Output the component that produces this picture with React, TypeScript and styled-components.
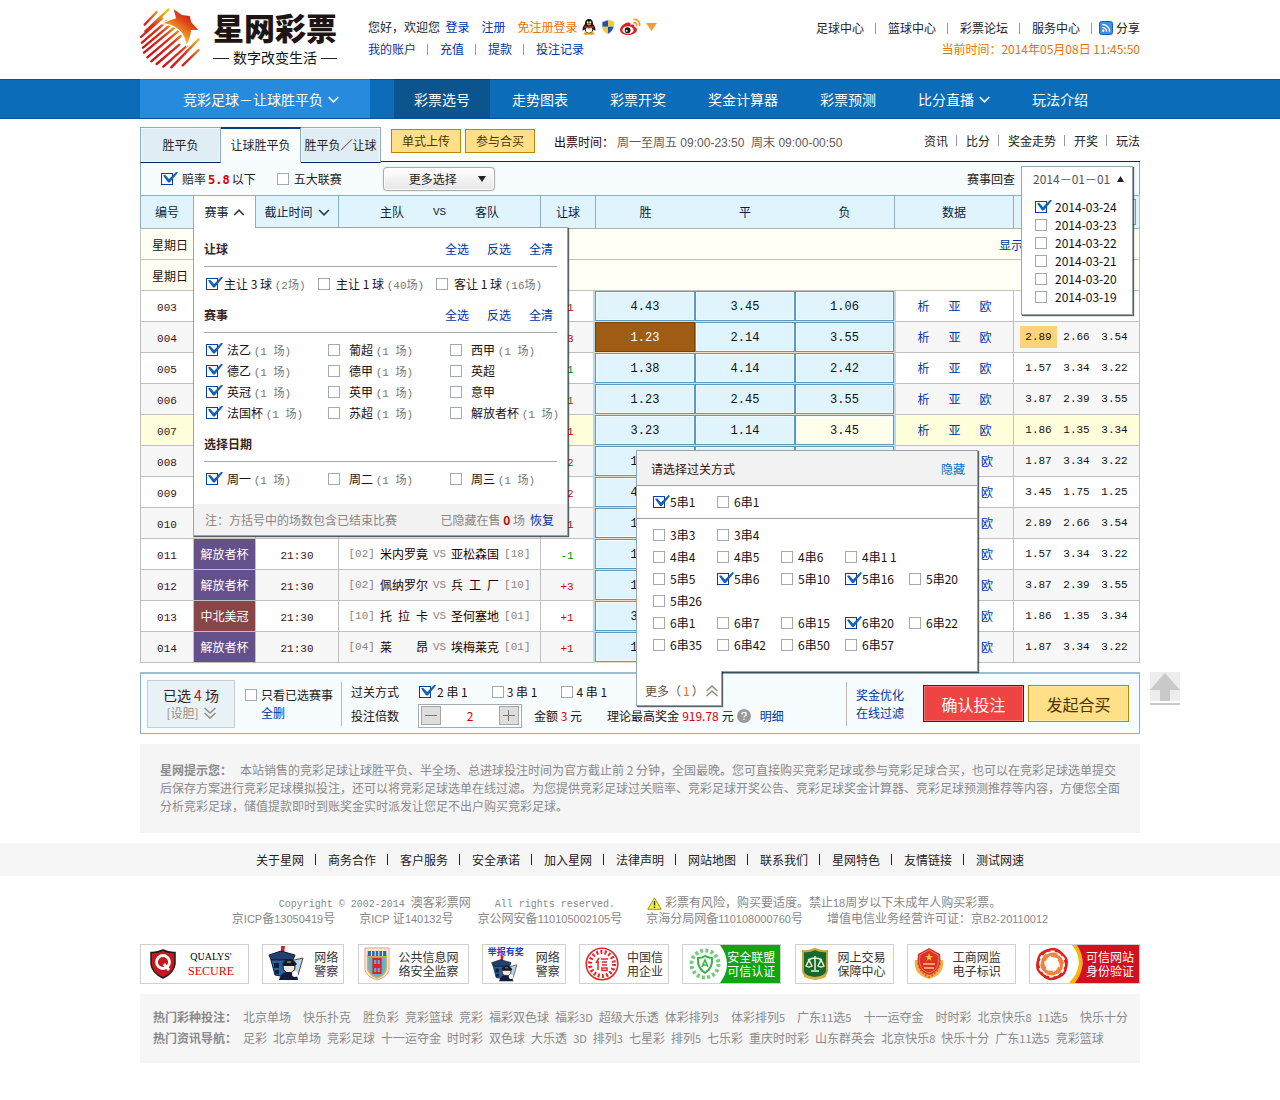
import React from "react";
import styled, { createGlobalStyle, css } from "styled-components";

const sans = `"Noto Sans CJK SC", "Liberation Sans", sans-serif`;
const latin = `"Liberation Sans", "Noto Sans CJK SC", sans-serif`;
const mono = `"Liberation Mono", "Noto Sans CJK SC", monospace`;
const serif = `"Liberation Serif", "Noto Sans CJK SC", serif`;

const c = {
  link: "#0033a8",
  red: "#d60000",
  orange: "#ec7200",
  ink: "#222",
  brown: "#3a1410",
  line: "#c0c0c0",
  blueLine: "#8fafc0",
  sky: "#e0f4fe",
  ice: "#f7fcff",
};

const GlobalStyle = createGlobalStyle`
  *, *::before, *::after { box-sizing: border-box; }
  body { margin: 0; background: #fff; color: ${c.ink}; font: 12px/18px ${sans}; }
  a { color: inherit; text-decoration: none; }
  button, input, select { font: inherit; color: inherit; margin: 0; }
  button { cursor: pointer; padding: 0; }
  h2, h3, p { margin: 0; font: inherit; }
`;

const Wrap = styled.div`
  max-width: 1000px;
  margin: 0 auto;
  white-space: nowrap;
`;

const Row = styled.div<{ $gap?: number; $justify?: string }>`
  display: flex;
  align-items: center;
  gap: ${(p) => p.$gap ?? 0}px;
  justify-content: ${(p) => p.$justify ?? "flex-start"};
`;

const Sep = styled.i<{ $gap?: number; $right?: number; $dark?: boolean }>`
  width: 1px;
  height: 11px;
  flex: none;
  margin-left: ${(p) => p.$gap ?? 11}px;
  margin-right: ${(p) => p.$right ?? (p.$gap ?? 11) + 1}px;
  background: ${(p) => (p.$dark ? "#222" : "#999")};
`;

const Link = styled.a<{ $color?: string }>`
  color: ${(p) => p.$color ?? c.link};
`;

const Red = styled.span`
  color: ${c.red};
`;

const Small = styled.span`
  font-size: 11px;
  line-height: 1;
`;

/* Sets the Latin runs of a mixed line one size down from the Chinese. */
const Mixed = ({ text }: { text: string }) => (
  <>
    {text.split(/([!-~]+)/).map((part, i) => (i % 2 ? <Small key={i}>{part}</Small> : part))}
  </>
);

/* ---------- check boxes ---------- */

const Box = styled.input`
  appearance: none;
  flex: none;
  position: relative;
  width: 12px;
  height: 12px;
  border: 1px solid #a2aaae;
  background: #fff;
  &:checked {
    border-color: #0a3ea0;
  }
  &:checked::after {
    content: "";
    position: absolute;
    left: 1px;
    top: -2px;
    width: 15px;
    height: 11px;
    background: #1260ba;
    clip-path: polygon(0 36%, 14% 30%, 40% 68%, 90% 0, 100% 10%, 45% 100%, 34% 100%);
  }
`;

const CheckLabel = styled.label<{ $gap?: number }>`
  display: inline-flex;
  align-items: center;
  gap: ${(p) => p.$gap ?? 5}px;
`;

const Check = ({ on, gap, children }: { on?: boolean; gap?: number; children: React.ReactNode }) => (
  <CheckLabel $gap={gap}>
    <Box type="checkbox" defaultChecked={on} />
    <span>{children}</span>
  </CheckLabel>
);

/* ---------- small drawings ---------- */

const Chevron = ({ up, color = "#fff", w = 11 }: { up?: boolean; color?: string; w?: number }) => (
  <svg width={w} height="7" viewBox="0 0 11 7" fill="none" stroke={color} strokeWidth="1.6">
    <path d={up ? "M0.7 6 5.5 1.2 10.3 6" : "M0.7 1 5.5 5.8 10.3 1"} />
  </svg>
);

const DoubleChevron = ({ up }: { up?: boolean }) => (
  <svg width="12" height="12" viewBox="0 0 12 12" fill="none" stroke="#9a8d80" strokeWidth="1.6">
    <path d={up ? "M.6 6 6 1l5.400 5M.6 11 6 6l5.400 5" : "M.6 1 6 6l5.400-5M.6 6 6 11l5.400-5"} />
  </svg>
);

const stripes = [
  [26, 62, 62, 24], [28, 82, 97, 17], [15, 99, 78, 43], [18, 116, 93, 51], [21, 131, 106, 60],
  [24, 146, 116, 70], [34, 160, 126, 82], [46, 172, 134, 96], [62, 180, 130, 122], [82, 188, 152, 126],
  [106, 190, 188, 106], [140, 184, 188, 138],
];

const Emblem = () => (
  <svg width="60" height="62" viewBox="12 12 180 186">
    <defs>
      <linearGradient id="stripe" gradientUnits="userSpaceOnUse" x1="50" y1="160" x2="135" y2="60">
        <stop offset="0" stopColor="#cc101b" />
        <stop offset=".55" stopColor="#da3018" />
        <stop offset="1" stopColor="#f0c318" />
      </linearGradient>
      <linearGradient id="star" gradientUnits="userSpaceOnUse" x1="165" y1="30" x2="115" y2="100">
        <stop offset="0" stopColor="#cc1518" />
        <stop offset=".35" stopColor="#de481a" />
        <stop offset="1" stopColor="#f8c82a" />
      </linearGradient>
    </defs>
    <g stroke="url(#stripe)" strokeWidth="7" strokeLinecap="round">
      {stripes.map(([x1, y1, x2, y2]) => (
        <line key={`${x1}-${y1}`} x1={x1} y1={y1} x2={x2} y2={y2} />
      ))}
    </g>
    <path
      d="M113 16 138 33 161 36 166 55 187 78 165 78Q164 100 152 121 146 92 130 78 110 60 82 58 104 47 120 43Z"
      fill="url(#star)"
      stroke="#fff"
      strokeWidth="7"
      paintOrder="stroke"
    />
  </svg>
);

const Penguin = () => (
  <svg width="14" height="16" viewBox="0 0 14 16">
    <ellipse cx="4.500" cy="14.600" rx="3" ry="1.300" fill="#f0a000" />
    <ellipse cx="9.500" cy="14.600" rx="3" ry="1.300" fill="#f0a000" />
    <path d="M7 0C3.800 0 3 2.400 3 5 1.400 7 .3 9 .6 11.500c.6.300 1.400-.5 1.800-1.200C3 13 5 14.300 7 14.300s4-1.300 4.600-4c.4.700 1.200 1.500 1.800 1.200C13.700 9 12.600 7 11 5c0-2.600-.8-5-4-5Z" fill="#161616" />
    <ellipse cx="7" cy="10.800" rx="3.200" ry="3" fill="#fff" />
    <path d="M2.800 6.800C5 8 9 8 11.200 6.800l.3 1.600C9 9.800 5 9.800 2.500 8.400Z" fill="#e02a20" />
    <ellipse cx="5.700" cy="3.400" rx=".9" ry="1.200" fill="#fff" />
    <ellipse cx="8.300" cy="3.400" rx=".9" ry="1.200" fill="#fff" />
    <ellipse cx="7" cy="5.500" rx="2" ry=".7" fill="#f0a000" />
  </svg>
);

const Shield = () => (
  <svg width="14" height="16" viewBox="0 0 14 16">
    <path d="M7 .5 13.300 2.600c.4 6-1.600 10.400-6.300 13C2.300 13 .3 8.600.7 2.600Z" fill="#c8ccd6" />
    <path d="M7 1.500v6.300H1.600C1.500 6 1.500 4.700 1.600 3.300Z" fill="#1e50b8" />
    <path d="M7 1.500v6.300h5.400c.1-1.800.1-3.100 0-4.500Z" fill="#f4cc2c" />
    <path d="M7 14.500V7.800H1.600c.5 3 2.400 5.300 5.400 6.700Z" fill="#f4cc2c" />
    <path d="M7 14.500V7.800h5.400c-.5 3-2.400 5.300-5.400 6.700Z" fill="#1e50b8" />
  </svg>
);

const Weibo = () => (
  <svg width="21" height="18" viewBox="0 0 21 18">
    <path d="M8 4.500C4 5 0 9 0 12c0 3 4 5 8.200 5 5 0 8.800-2.600 8.800-5.300 0-1.700-1.300-2.500-2.700-2.800.6-1.800-.6-3-3.800-2C11 5.200 10 4.300 8 4.500Z" fill="#e01f20" />
    <ellipse cx="8" cy="12" rx="5.600" ry="3.800" fill="#fff" />
    <circle cx="7.600" cy="12.200" r="2.900" fill="#1a1a1a" />
    <circle cx="6.700" cy="12.800" r="1" fill="#fff" />
    <path d="M13.200 4.600c2-.4 3.800 1 3.300 3.300M13.400 1.500c4-.6 7 2.500 6 6.500" fill="none" stroke="#f39a1c" strokeWidth="1.700" />
  </svg>
);

const Triangle = ({ up, color = "#222", w = 8, h = 6 }: { up?: boolean; color?: string; w?: number; h?: number }) => (
  <svg width={w} height={h} viewBox="0 0 8 6" preserveAspectRatio="none">
    <path d={up ? "M0 6 4 0 8 6Z" : "M0 0 4 6 8 0Z"} fill={color} />
  </svg>
);

const Feed = () => (
  <svg width="14" height="14" viewBox="0 0 14 14">
    <rect x=".5" y=".5" width="13" height="13" rx="2" fill="#3d8ee8" stroke="#1560c4" />
    <circle cx="4.300" cy="9.800" r="1.200" fill="#fff" />
    <path d="M3.200 6.300c2.400 0 4.500 2 4.500 4.500M3.200 3.300c4.200 0 7.500 3.300 7.500 7.500" fill="none" stroke="#fff" strokeWidth="1.300" />
  </svg>
);

/* ---------- header ---------- */

const HeaderRow = styled(Wrap)`
  display: flex;
  height: 79px;
`;

const Brand = styled.div`
  display: flex;
  gap: 13px;
  padding-top: 8px;
  width: 228px;
  font-family: ${latin};
`;

const BrandName = styled.div`
  font-weight: 900;
  font-size: 31px;
  line-height: 44px;
  color: #1d1512;
`;

const Slogan = styled.div`
  display: flex;
  align-items: center;
  justify-content: space-between;
  font-size: 14px;
  line-height: 12px;
  color: #111;
  &::before,
  &::after {
    content: "";
    width: 16px;
    height: 1px;
    background: #222;
  }
`;

const Account = styled.div`
  display: flex;
  flex-direction: column;
  gap: 4px;
  padding-top: 18px;
`;

const TopLinks = styled.div`
  margin-left: auto;
  display: flex;
  flex-direction: column;
  align-items: flex-end;
  gap: 3px;
  padding-top: 19px;
`;

const Clock = styled.div`
  color: ${c.orange};
`;

const NavBar = styled.nav`
  background: #0b6cba;
  border-top: 1px solid #07509c;
  border-bottom: 1px solid #07509c;
`;

const NavRow = styled(Wrap)`
  display: flex;
  gap: 2px;
  height: 38px;
`;

const NavItem = styled.a<{ $kind?: "menu" | "active" }>`
  display: flex;
  align-items: center;
  justify-content: center;
  gap: 5px;
  padding: 0 20px;
  font-size: 14px;
  color: #fff;
  ${(p) =>
    p.$kind === "menu" &&
    css`
      width: 230px;
      margin-right: 22px;
      padding-right: 8px;
      background: #268bdc;
      box-shadow: 0 -1px #1578cc;
    `}
  ${(p) =>
    p.$kind === "active" &&
    css`
      background: #0c548e;
      box-shadow: 0 -1px #08407a;
    `}
`;

/* ---------- tabs ---------- */

const TabBar = styled(Wrap)`
  display: flex;
  height: 36px;
  margin-top: 7px;
  border-bottom: 1px solid #0a2466;
`;

const Tab = styled.button<{ $active?: boolean }>`
  width: 80px;
  height: 36px;
  margin-top: 1px;
  padding-bottom: 1px;
  border: 1px solid #8dadbd;
  border-bottom-color: #0a2466;
  background: #e0edf5;
  box-shadow: inset 0 0 0 1px #f0f7fb;
  &:first-child {
    width: 81px;
  }
  & + & {
    border-left: 0;
  }
  ${(p) =>
    p.$active &&
    css`
      border-top: 2px solid #0c3f80;
      border-bottom-color: ${c.ice};
      background: linear-gradient(#fff, ${c.ice});
      box-shadow: none;
    `}
`;

const Gold = styled.button`
  width: 70px;
  height: 24px;
  border: 1px solid #c08400;
  background: #ffdf88;
  color: #4a3500;
`;

const TabButtons = styled.div`
  display: flex;
  gap: 4px;
  padding: 3px 0 0 10px;
`;

const SaleTime = styled.div`
  display: flex;
  align-items: baseline;
  gap: 3px;
  padding: 7px 0 0 19px;
  color: #300;
`;

const Hours = styled.span`
  font-family: ${latin};
  color: #665a55;
`;

const TabLinks = styled.div`
  margin-left: auto;
  display: flex;
  align-items: center;
  height: 29px;
`;

/* ---------- filter row ---------- */

const Filters = styled(Wrap)`
  display: flex;
  align-items: center;
  gap: 21px;
  height: 33px;
  padding: 0 6px 0 20px;
  background: ${c.ice};
  border: solid ${c.blueLine};
  border-width: 0 1px;
`;

const Strong = styled.b`
  color: ${c.red};
  font-family: "DejaVu Sans Mono", monospace;
  font-size: 12px;
  line-height: 1;
  margin: 0 2px;
`;

const MoreWrap = styled.div`
  position: relative;
  margin-left: 20px;
  svg {
    position: absolute;
    right: 9px;
    top: 9px;
    pointer-events: none;
  }
`;

const MoreSelect = styled.select`
  appearance: none;
  width: 112px;
  height: 24px;
  padding: 0 25px;
  border: 1px solid #a8acae;
  border-radius: 4px;
  background: linear-gradient(#fff, #e6e6e6);
  box-shadow: inset 0 0 0 1px #fff, 0 0 1px #999;
`;

const History = styled.div`
  margin-left: auto;
  display: flex;
  align-items: center;
  gap: 6px;
`;

const DateAnchor = styled.div`
  position: relative;
  width: 112px;
  height: 26px;
`;

const popup = css`
  position: absolute;
  background: #fff;
  border: 1px solid #98a4aa;
  box-shadow: 1px 1px 1px rgba(20, 30, 35, 0.7);
`;

const DatePopup = styled.div`
  ${popup}
  z-index: 5;
  top: 0;
  left: 0;
  right: 0;
  padding-bottom: 8px;
`;

const DateButton = styled.button`
  display: flex;
  align-items: center;
  justify-content: space-between;
  width: 100%;
  height: 24px;
  padding: 0 8px 0 11px;
  border: 0;
  background: none;
  color: #555;
  white-space: nowrap;
`;

const DateList = styled.div`
  display: flex;
  flex-direction: column;
  padding: 7px 0 0 13px;
  color: #111;
`;

/* ---------- match table ---------- */

const TableArea = styled(Wrap)`
  position: relative;
`;

const Matches = styled.table`
  width: 100%;
  table-layout: fixed;
  border-collapse: separate;
  border-spacing: 0;
  border-right: 1px solid ${c.line};
  text-align: center;
`;

const Th = styled.th<{ $open?: boolean; $plain?: boolean; $end?: boolean }>`
  height: 34px;
  padding: 0;
  font-weight: normal;
  color: #0b1c38;
  background: ${(p) => (p.$open ? "#fff" : c.sky)};
  border: solid ${c.blueLine};
  border-width: 1px 0 1px ${(p) => (p.$plain ? 0 : 1)}px;
  border-bottom-color: ${(p) => (p.$open ? "#fff" : "#a8b4ba")};
  ${(p) =>
    p.$end &&
    css`
      text-align: right;
      padding-right: 3px;
    `}
`;

const Td = styled.td<{ $bg?: string; $kind?: "odds" | "data" | "hand" }>`
  height: 31px;
  padding: 0;
  background: ${(p) => p.$bg ?? "transparent"};
  border: solid ${c.line};
  border-width: 0 0 1px 1px;
  ${(p) => p.$kind === "data" && css`border-left: 2px solid #b9dcec;`}
  ${(p) => p.$kind === "hand" && css`border-right: 2px solid #b9dcec;`}
  ${(p) =>
    p.$kind === "odds" &&
    css`
      border-left: 0;
      border-bottom-color: #ecdccb;
    `}
`;

const DayTd = styled(Td)`
  text-align: left;
  padding: 2px 0 0 11px;
  color: #211;
`;

const DayRow = styled.div`
  display: flex;
  justify-content: flex-end;
  padding-right: 116px;
`;

const Tr = styled.tr<{ $bg: string }>`
  background: ${(p) => p.$bg};
`;

const Code = styled.span<{ $color?: string }>`
  font: 11px/16px ${mono};
  color: ${(p) => p.$color ?? c.brown};
`;

const OddsButton = styled.button<{ $state?: "on" | "hover" }>`
  display: block;
  width: 100%;
  height: 30px;
  padding-top: 2px;
  border: 1px solid #5b9aba;
  background: ${c.sky};
  box-shadow: inset 0 0 0 1px #f2fbff;
  font: 12px/18px ${mono};
  color: #111;
  ${(p) =>
    p.$state === "on" &&
    css`
      border-color: #7a4300;
      background: #a05c14;
      box-shadow: none;
      color: #fff;
    `}
  ${(p) => p.$state === "hover" && css`background: #ffffec;`}
`;

const DataLinks = styled.div<{ $end: boolean }>`
  display: flex;
  gap: 19px;
  justify-content: ${(p) => (p.$end ? "flex-end" : "center")};
  padding-right: ${(p) => (p.$end ? 20 : 0)}px;
`;

const Averages = styled.div`
  display: grid;
  grid-template-columns: repeat(3, 37px);
  gap: 1px;
  justify-content: center;
`;

const Average = styled.span<{ $mark?: boolean }>`
  font: 11px/22px ${mono};
  color: #111;
  background: ${(p) => (p.$mark ? "#ffd27c" : "none")};
`;

const Team = styled.span`
  width: 48px;
  color: #200;
`;

const HeadSelect = styled.select`
  appearance: none;
  width: 66px;
  height: 26px;
  padding: 0 4px;
  border: 1px solid #6f9fb8;
  background: ${c.sky};
`;

/* ---------- league popup ---------- */

const LeaguePopup = styled.div`
  ${popup}
  z-index: 4;
  left: 53px;
  top: 32px;
  width: 375px;
  padding-top: 13px;
  &::before {
    content: "";
    position: absolute;
    left: 0;
    top: -1px;
    width: 61px;
    height: 1px;
    background: #fff;
  }
`;

const Section = styled.section`
  padding: 0 10px 0 12px;
`;

const SectionHead = styled.div`
  display: flex;
  gap: 18px;
  height: 26px;
  margin: 0 0 6px -2px;
  padding-right: 4px;
  border-bottom: 1px solid #a0a8aa;
  line-height: 16px;
`;

const SectionTitle = styled.h3`
  flex: 1;
  font-weight: bold;
  color: #3a2420;
`;

const Grid = styled.div<{ $cols: string; $line: number; $bottom?: number }>`
  display: grid;
  grid-template-columns: ${(p) => p.$cols};
  grid-auto-rows: ${(p) => p.$line}px;
  align-items: center;
  margin-bottom: ${(p) => p.$bottom ?? 0}px;
  color: #211;
`;

const Count = styled.span`
  font: 11px/1 ${mono};
  color: #777;
`;

const LeagueFoot = styled.div`
  display: flex;
  align-items: center;
  height: 31px;
  padding: 0 13px 0 11px;
  background: #f2f2f2;
  color: #8a8582;
  gap: 5px;
`;

const Push = styled.span`
  margin-left: auto;
`;

/* ---------- bet bar ---------- */

const BetBar = styled(Wrap)`
  position: relative;
  display: flex;
  align-items: center;
  height: 62px;
  margin-top: 9px;
  padding: 0 10px 0 6px;
  background: ${c.ice};
  border: 1px solid ${c.blueLine};
  border-top: 2px solid #a0bfce;
`;

const Picked = styled.button`
  width: 88px;
  height: 48px;
  border: 1px solid #c9cccd;
  background: #e9f2f6;
  color: #322;
  font-size: 14px;
`;

const Dan = styled.span`
  display: flex;
  align-items: center;
  justify-content: center;
  gap: 5px;
  font-size: 12px;
  color: #9a8d80;
`;

const OnlyPicked = styled.div`
  display: flex;
  flex-direction: column;
  padding-left: 10px;
  a {
    padding-left: 16px;
  }
`;

const Rule = styled.i`
  width: 1px;
  height: 44px;
  background: #bbb;
  margin: 0 9px 0 8px;
`;

const BetLines = styled.div`
  display: grid;
  grid-template-rows: 24px 24px;
  color: #211;
`;

const BetLine = styled.div`
  display: flex;
  align-items: center;
`;

const PassChoices = styled.div`
  display: flex;
  gap: 24px;
  padding-left: 20px;
`;

const Stepper = styled.div`
  display: flex;
  align-items: center;
  justify-content: space-between;
  width: 104px;
  height: 24px;
  margin: 0 12px 0 19px;
  padding: 0 2px;
  border: 1px solid #a5acb0;
  background: #fff;
`;

const StepButton = styled.button`
  display: grid;
  place-items: center;
  width: 20px;
  height: 19px;
  border: 1px solid #a5a5a5;
  background: #dedede;
`;

const StepInput = styled.input`
  width: 40px;
  border: 0;
  padding: 0;
  text-align: center;
  color: ${c.red};
  background: none;
`;

const Prize = styled.span`
  display: flex;
  align-items: center;
  gap: 3px;
  margin: 0 9px 0 25px;
`;

const Actions = styled.div`
  display: flex;
  gap: 4px;
  padding-left: 19px;
`;

const Links2 = styled.div`
  display: flex;
  flex-direction: column;
`;

const Action = styled.button<{ $gold?: boolean }>`
  width: 101px;
  height: 37px;
  border: 1px solid ${(p) => (p.$gold ? "#c08400" : "#7a0808")};
  background: ${(p) => (p.$gold ? "#ffdf88" : "#ee4444")};
  color: ${(p) => (p.$gold ? "#4a3500" : "#fff")};
  box-shadow: inset 0 0 0 1px rgba(255, 255, 255, 0.25);
  font-size: 16px;
`;

const PassPopup = styled.div`
  ${popup}
  z-index: 6;
  left: 495px;
  bottom: calc(100% + 2px);
  width: 342px;
  height: 222px;
`;

const PassHead = styled.div`
  display: flex;
  align-items: center;
  justify-content: space-between;
  height: 35px;
  padding: 1px 12px 0 14px;
  background: #f2f2f2;
  border-bottom: 1px solid #98a4aa;
  color: #311;
`;

const PassTop = styled.div`
  display: flex;
  align-items: center;
  height: 33px;
  padding-left: 16px;
  border-bottom: 1px solid #98a4aa;
`;

const PassBody = styled.div`
  padding: 5px 0 0 16px;
`;

const PassTail = styled.button`
  position: absolute;
  top: 100%;
  left: -1px;
  display: flex;
  align-items: center;
  gap: 2px;
  width: 86px;
  height: 35px;
  padding: 6px 0 0 8px;
  background: #fff;
  border: 1px solid #98a4aa;
  border-top: 0;
  box-shadow: 1px 1px 1px rgba(20, 30, 35, 0.7);
  color: #665040;
`;

const ToTop = styled.a`
  position: absolute;
  left: calc(100% + 11px);
  top: -2px;
  width: 30px;
  height: 33px;
`;

/* ---------- footer ---------- */

const Tips = styled(Wrap)`
  margin-top: 10px;
  padding: 17px 20px 18px;
  background: #f5f5f5;
  color: #8a8a8a;
  white-space: normal;
  b {
    margin-right: 8px;
  }
`;

const SiteLinks = styled.nav`
  margin-top: 10px;
  display: flex;
  align-items: center;
  justify-content: center;
  height: 33px;
  background: #f6f6f6;
`;

const Legal = styled(Wrap)`
  padding-top: 19px;
  color: #888;
  font-family: ${latin};
  line-height: 16px;
`;

const LatinMono = styled.span`
  font: 10px/1 ${mono};
`;

const LegalRow = styled.div`
  display: flex;
  justify-content: center;
  gap: 24px;
  height: 16px;
`;

const Warn = styled.span`
  display: flex;
  align-items: center;
  gap: 3px;
  margin-left: 8px;
`;

const Badges = styled(Wrap)`
  display: flex;
  justify-content: space-between;
  margin-top: 17px;
  font-family: ${latin};
`;

const Badge = styled.a<{ $w: number }>`
  position: relative;
  display: flex;
  align-items: center;
  justify-content: space-between;
  width: ${(p) => p.$w}px;
  height: 40px;
  padding: 0 5px;
  overflow: hidden;
  border: 1px solid #d0d0d0;
  line-height: 14px;
  color: #333;
`;

const IconPad = styled.span`
  display: flex;
  padding-left: 4px;
`;

const Award = styled.span`
  position: absolute;
  left: 5px;
  top: 1px;
  font-size: 9px;
  line-height: 12px;
  font-weight: bold;
  color: #2440b8;
`;

const BadgeText = styled.span<{ $light?: boolean; $pad?: number }>`
  position: relative;
  padding: 2px ${(p) => p.$pad ?? 0}px 0 0;
  color: ${(p) => (p.$light ? "#fff" : "inherit")};
`;

const BadgeSweep = styled.svg`
  position: absolute;
  right: 0;
  top: 0;
`;

const Qualys = styled.span`
  font: 10px/14px ${serif};
  color: #000;
  text-align: center;
  padding-right: 9px;
  em {
    display: block;
    font-style: normal;
    font-size: 12px;
    color: #d00;
  }
`;

const Hot = styled(Wrap)`
  margin-top: 10px;
  padding: 12px 13px 15px;
  background: #f6f6f6;
  color: #8a8a8a;
`;

const HotRow = styled.div`
  display: flex;
  gap: 6px;
  height: 21px;
  line-height: 21px;
`;

const HotLink = styled.a<{ $wide?: boolean }>`
  margin-left: ${(p) => (p.$wide ? 6 : 0)}px;
`;

/* ---------- badge pictures ---------- */

const PoliceBox = ({ small }: { small?: boolean }) => (
  <svg width="36" height="36" viewBox="0 0 36 36">
    <g transform={small ? "translate(3 10) scale(.74)" : undefined}>
      <path d="M13 0h4l-1 7h-3Z" fill="#e02020" />
      <path d="M1 9 13 5l14 4-2 5H3Z" fill="#23406e" stroke="#0c1c3c" />
      <path d="M3 14h17l-2 17-11-2Z" fill="#2a62a0" stroke="#0c1c3c" />
      <path d="M6 17h5v5H6Zm1 7h4v4H7Z" fill="#0f2240" />
      <path d="M22 15 35 12l-5 17-10 3Z" fill="#bcd4e8" stroke="#444" />
      <circle cx="21" cy="21" r="6" fill="#f4e6d6" stroke="#111" />
      <path d="M14 18q7-10 15 0l-2 2H16Z" fill="#10182c" />
      <path d="M19 16h4" stroke="#e8c23a" />
      <path d="M11 34q2-9 10-8 8 0 9 8Z" fill="#141e3c" />
      <circle cx="27" cy="28" r="3" fill="#fff" />
    </g>
  </svg>
);

const QualysMark = () => (
  <svg width="26" height="30" viewBox="0 0 26 30">
    <path d="M13 1q6 3 12 2.500V15q-1 9-12 14Q2 24 1 15V3.500Q7 4 13 1Z" fill="#c8171e" stroke="#1c1c1c" strokeWidth="1.500" />
    <circle cx="13" cy="13" r="6.500" fill="none" stroke="#fff" strokeWidth="2.800" />
    <path d="m14 15 5 6" stroke="#fff" strokeWidth="2.800" />
  </svg>
);

const InfoShield = () => (
  <svg width="26" height="34" viewBox="0 0 28 34" preserveAspectRatio="none">
    <path d="M1 1h26v22q-2 7-13 10Q3 30 1 23Z" fill="#f3ead0" stroke="#e89a9a" />
    <path d="M4 9h20v13q-2 7-10 9Q6 28 4 22Z" fill="#58b4e4" stroke="#e0b030" strokeWidth="1.500" />
    <path d="M4 4h20v5H4Z" fill="#2a67b8" />
    <path d="M8 4v5M12 4v5M16 4v5M20 4v5" stroke="#fff" />
    <path d="M10 12h8v6h-8Zm0 8h8v6h-8Z" fill="none" stroke="#d8261e" strokeWidth="2" />
    <path d="M14 11v15" stroke="#d8261e" strokeWidth="1.500" />
  </svg>
);

const TrustSeal = () => (
  <svg width="34" height="34" viewBox="0 0 34 34" fill="none" stroke="#e02a2a">
    <circle cx="17" cy="17" r="15.800" strokeWidth="1.600" />
    <circle cx="17" cy="17" r="12" strokeWidth="4" strokeDasharray="2 2.200" />
    <path d="M14 11l-3 5M13 14v9M16 12h7M17 15h5M17 18h5M17 21h5v2.500h-5Z" strokeWidth="1.500" />
  </svg>
);

const Laurel = () => (
  <svg width="34" height="34" viewBox="0 0 34 34" fill="none" stroke="#3cb44a">
    <circle cx="17" cy="17" r="13.500" strokeWidth="4" strokeDasharray="3 2.300" opacity=".7" />
    <path d="M17 9q4 2 7 2 1 10-7 15-8-5-7-15 4 0 7-2Z" strokeWidth="2" fill="#fff" />
    <path d="m14 20 3-7 3 7M15 18h4" strokeWidth="1.600" />
  </svg>
);

const Scales = () => (
  <svg width="28" height="34" viewBox="0 0 28 34">
    <path d="M2 4q6 1 12-2 6 3 12 2v20q0 5-12 8Q2 29 2 24Z" fill="#146a2c" stroke="#caa23a" strokeWidth="2" />
    <path d="M14 9v14M7 13q7-4 14 0M5 19l3-6 3 6q-3 2-6 0Zm12 0 3-6 3 6q-3 2-6 0ZM10 24h8" fill="none" stroke="#f2f4d8" strokeWidth="1.500" />
    <path d="M3 27q11 6 22 0v3q-11 5-22 0Z" fill="#d8b040" />
  </svg>
);

const Crest = () => (
  <svg width="32" height="34" viewBox="0 0 32 34">
    <path d="M2 13Q0 28 16 32 32 28 30 13Z" fill="#f2b04c" />
    <path d="M5 16q2 10 11 14M27 16q-2 10-11 14" stroke="#d8641e" fill="none" strokeWidth="2" strokeDasharray="2 1.500" />
    <path d="M16 1 27 7q2 12-4 17-3 3-7 4-4-1-7-4Q3 19 5 7Z" fill="#dc3228" />
    <path d="M16 3 25 8q2 10-3 15-3 2-6 3-3-1-6-3Q5 18 7 8Z" fill="none" stroke="#ee7a5a" />
    <path d="m16 6 1 3h3l-2.500 2 1 3-2.500-2-2.500 2 1-3L12 9h3Z" fill="#f8c83c" />
    <path d="M10 16h12v2H10Zm1 4h10v2H11Z" fill="#f3a05a" />
  </svg>
);

const Knot = () => (
  <svg width="34" height="34" viewBox="0 0 34 34" fill="none">
    {[0, 60, 120, 180, 240, 300].map((a) => (
      <g key={a} transform={`rotate(${a} 17 17)`}>
        <path d="M7 8Q11 2 19 2q6 1 9 7" stroke="#dc241c" strokeWidth="2.400" />
        <path d="M10 14q3-8 11-6 6 2 7 9" stroke="#f0803a" strokeWidth="1.800" />
      </g>
    ))}
  </svg>
);

/* ---------- data ---------- */

type Match = {
  id: string;
  league?: [string, string];
  time?: string;
  teams?: [string, string, string, string];
  hand: string;
  odds: string[];
  avg: string[];
};

const purple = "#64508a";
const matches: Match[] = [
  { id: "003", hand: "+1", odds: ["4.43", "3.45", "1.06"], avg: [] },
  { id: "004", hand: "+3", odds: ["1.23", "2.14", "3.55"], avg: ["2.89", "2.66", "3.54"] },
  { id: "005", hand: "-1", odds: ["1.38", "4.14", "2.42"], avg: ["1.57", "3.34", "3.22"] },
  { id: "006", hand: "-1", odds: ["1.23", "2.45", "3.55"], avg: ["3.87", "2.39", "3.55"] },
  { id: "007", hand: "+1", odds: ["3.23", "1.14", "3.45"], avg: ["1.86", "1.35", "3.34"] },
  { id: "008", hand: "+2", odds: ["1.38", "", ""], avg: ["1.87", "3.34", "3.22"] },
  { id: "009", hand: "+2", odds: ["4.43", "", ""], avg: ["3.45", "1.75", "1.25"] },
  { id: "010", hand: "+1", odds: ["1.23", "", ""], avg: ["2.89", "2.66", "3.54"] },
  { id: "011", league: ["解放者杯", purple], time: "21:30", teams: ["02", "米内罗竟", "亚松森国", "18"], hand: "-1", odds: ["1.38", "", ""], avg: ["1.57", "3.34", "3.22"] },
  { id: "012", league: ["解放者杯", purple], time: "21:30", teams: ["02", "佩纳罗尔", "兵\u2002工\u2002厂", "10"], hand: "+3", odds: ["1.23", "", ""], avg: ["3.87", "2.39", "3.55"] },
  { id: "013", league: ["中北美冠", "#884648"], time: "21:30", teams: ["10", "托\u2002拉\u2002卡", "圣何塞地", "01"], hand: "+1", odds: ["3.23", "", ""], avg: ["1.86", "1.35", "3.34"] },
  { id: "014", league: ["解放者杯", purple], time: "21:30", teams: ["04", "莱\u3000\u3000昂", "埃梅莱克", "01"], hand: "+1", odds: ["1.38", "", ""], avg: ["1.87", "3.34", "3.22"] },
];

const leagues: [string, boolean, boolean][] = [
  ["法乙", true, true], ["葡超", false, true], ["西甲", false, true],
  ["德乙", true, true], ["德甲", false, true], ["英超", false, false],
  ["英冠", true, true], ["英甲", false, true], ["意甲", false, false],
  ["法国杯", true, true], ["苏超", false, true], ["解放者杯", false, true],
];

const passes: (string | null)[] = [
  "3串3", "3串4", null, null, null,
  "4串4", "4串5", "4串6", "4串1 1", null,
  "5串5", "5串6", "5串10", "5串16", "5串20",
  "5串26", null, null, null, null,
  "6串1", "6串7", "6串15", "6串20", "6串22",
  "6串35", "6串42", "6串50", "6串57", null,
];
const passesOn = ["5串6", "5串16", "6串20"];

const hot1: [string, boolean?][] = [
  ["北京单场"], ["快乐扑克", true], ["胜负彩", true], ["竞彩篮球"], ["竞彩"], ["福彩双色球"], ["福彩3D"], ["超级大乐透"],
  ["体彩排列3"], ["体彩排列5", true], ["广东11选5", true], ["十一运夺金", true], ["时时彩", true], ["北京快乐8"], ["11选5"], ["快乐十分", true],
];
const hot2 = ["足彩", "北京单场", "竞彩足球", "十一运夺金", "时时彩", "双色球", "大乐透", "3D", "排列3", "七星彩", "排列5", "七乐彩", "重庆时时彩", "山东群英会", "北京快乐8", "快乐十分", "广东11选5", "竞彩篮球"];

/* Puts a divider between the links of a list. */
const Divided = ({ items, gap, dark }: { items: string[]; gap?: number; dark?: boolean }) => (
  <>
    {items.map((t, i) => (
      <React.Fragment key={t}>
        {i > 0 && <Sep $gap={gap} $dark={dark} />}
        <a href="#">{t}</a>
      </React.Fragment>
    ))}
  </>
);

const SectionLinks = () => (
  <>
    <Link href="#">全选</Link>
    <Link href="#">反选</Link>
    <Link href="#">全清</Link>
  </>
);

const colWidths = [53, 62, 83, 202, 55, 100, 100, 99, 119];

const Header = () => (
  <header>
    <HeaderRow>
      <Brand>
        <Emblem />
        <div>
          <BrandName>星网彩票</BrandName>
          <Slogan>数字改变生活</Slogan>
        </div>
      </Brand>
      <Account>
        <Row>
          您好，欢迎您&nbsp;&nbsp;<Link href="#">登录</Link>&emsp;<Link href="#">注册</Link>&emsp;
          <Row $gap={5}>
            <Link href="#" $color={c.orange}>免注册登录</Link>
            <Penguin />
            <Shield />
            <Weibo />
            <Triangle color="#f39c30" w={11} h={8} />
          </Row>
        </Row>
        <Row>
          <Link href="#">我的账户</Link>
          <Sep />
          <Link href="#">充值</Link>
          <Sep />
          <Link href="#">提款</Link>
          <Sep />
          <Link href="#">投注记录</Link>
        </Row>
      </Account>
      <TopLinks>
        <Row>
          <Divided items={["足球中心", "篮球中心", "彩票论坛", "服务中心"]} />
          <Sep $right={7} />
          <Row as="a" href="#" $gap={3}>
            <Feed />
            分享
          </Row>
        </Row>
        <Clock>当前时间：2014年05月08日 11:45:50</Clock>
      </TopLinks>
    </HeaderRow>
    <NavBar>
      <NavRow>
        <NavItem href="#" $kind="menu">竞彩足球－让球胜平负<Chevron /></NavItem>
        <NavItem href="#" $kind="active">彩票选号</NavItem>
        <NavItem href="#">走势图表</NavItem>
        <NavItem href="#">彩票开奖</NavItem>
        <NavItem href="#">奖金计算器</NavItem>
        <NavItem href="#">彩票预测</NavItem>
        <NavItem href="#">比分直播<Chevron /></NavItem>
        <NavItem href="#">玩法介绍</NavItem>
      </NavRow>
    </NavBar>
  </header>
);

const FilterArea = () => (
  <>
    <TabBar>
      <Tab>胜平负</Tab>
      <Tab $active>让球胜平负</Tab>
      <Tab>胜平负／让球</Tab>
      <TabButtons>
        <Gold>单式上传</Gold>
        <Gold>参与合买</Gold>
      </TabButtons>
      <SaleTime>
        出票时间：<Hours>周一至周五 09:00-23:50&nbsp; 周末 09:00-00:50</Hours>
      </SaleTime>
      <TabLinks>
        <Divided items={["资讯", "比分", "奖金走势", "开奖", "玩法"]} gap={8} />
      </TabLinks>
    </TabBar>
    <Filters>
      <Check on gap={9}>
        赔率<Strong>5.8</Strong>以下
      </Check>
      <Check>五大联赛</Check>
      <MoreWrap>
        <MoreSelect aria-label="更多选择">
          <option>更多选择</option>
        </MoreSelect>
        <Triangle />
      </MoreWrap>
      <History>
        赛事回查
        <DateAnchor>
          <DatePopup>
            <DateButton>
              2014－01－01 <Triangle up w={7} h={6} />
            </DateButton>
            <DateList>
              {["24", "23", "22", "21", "20", "19"].map((d, i) => (
                <Check key={d} on={i === 0} gap={8}>
                  2014-03-{d}
                </Check>
              ))}
            </DateList>
          </DatePopup>
        </DateAnchor>
      </History>
    </Filters>
  </>
);

const LeagueFilter = () => (
  <LeaguePopup>
    <Section>
      <SectionHead>
        <SectionTitle>让球</SectionTitle>
        <SectionLinks />
      </SectionHead>
      <Grid $cols="112px 118px auto" $line={21} $bottom={13}>
        <Check on gap={6}>主让 3 球 <Count>(2场)</Count></Check>
        <Check gap={6}>主让 1 球 <Count>(40场)</Count></Check>
        <Check gap={6}>客让 1 球 <Count>(16场)</Count></Check>
      </Grid>
    </Section>
    <Section>
      <SectionHead>
        <SectionTitle>赛事</SectionTitle>
        <SectionLinks />
      </SectionHead>
      <Grid $cols="122px 122px auto" $line={21} $bottom={13}>
        {leagues.map(([name, on, count]) => (
          <Check key={name} on={on} gap={9}>
            {name} {count && <Count>(1 场)</Count>}
          </Check>
        ))}
      </Grid>
    </Section>
    <Section>
      <SectionHead>
        <SectionTitle>选择日期</SectionTitle>
      </SectionHead>
      <Grid $cols="122px 122px auto" $line={21} $bottom={15}>
        {["周一", "周二", "周三"].map((d, i) => (
          <Check key={d} on={i === 0} gap={9}>
            {d} <Count>(1 场)</Count>
          </Check>
        ))}
      </Grid>
    </Section>
    <LeagueFoot>
      注：方括号中的场数包含已结束比赛
      <Push>
        已隐藏在售 <Red as="b">0</Red> 场
      </Push>
      <Link href="#">恢复</Link>
    </LeagueFoot>
  </LeaguePopup>
);

const MatchTable = () => (
  <TableArea>
    <Matches>
      <colgroup>
        {colWidths.map((w, i) => (
          <col key={i} width={w} />
        ))}
        <col />
      </colgroup>
      <thead>
        <tr>
          <Th>编号</Th>
          <Th $open>
            <Row $gap={4} $justify="center">赛事<Chevron up color="#24384a" w={12} /></Row>
          </Th>
          <Th>
            <Row $gap={5} $justify="center">截止时间<Chevron color="#24384a" w={12} /></Row>
          </Th>
          <Th>
            <Row $gap={29} $justify="center">
              <span>主队</span>
              <Code $color="#0b1c38">VS</Code>
              <span>客队</span>
            </Row>
          </Th>
          <Th>让球</Th>
          <Th>胜</Th>
          <Th $plain>平</Th>
          <Th $plain>负</Th>
          <Th>数据</Th>
          <Th $end>
            <HeadSelect aria-label="平均赔率" />
          </Th>
        </tr>
      </thead>
      <tbody>
        {[0, 1].map((i) => (
          <Tr key={i} $bg="#fffff4">
            <DayTd>星期日</DayTd>
            <DayTd colSpan={9}>
              {i === 0 && (
                <DayRow>
                  <Link href="#">显示</Link>
                </DayRow>
              )}
            </DayTd>
          </Tr>
        ))}
        {matches.map((m, i) => (
          <Tr key={m.id} $bg={m.id === "007" ? "#ffffdc" : i % 2 ? "#f7f7f7" : "#fff"}>
            <Td><Code>{m.id}</Code></Td>
            <Td $bg={m.league?.[1]}>
              {m.league && <Link href="#" $color="#fff">{m.league[0]}</Link>}
            </Td>
            <Td><Code>{m.time}</Code></Td>
            <Td>
              {m.teams && (
                <Row $gap={5} $justify="center">
                  <Code $color="#8e837c">[{m.teams[0]}]</Code>
                  <Team>{m.teams[1]}</Team>
                  <Code $color="#8e837c">VS</Code>
                  <Team>{m.teams[2]}</Team>
                  <Code $color="#8e837c">[{m.teams[3]}]</Code>
                </Row>
              )}
            </Td>
            <Td $kind="hand"><Code $color={m.hand[0] === "-" ? "#008c00" : c.red}>{m.hand}</Code></Td>
            {m.odds.map((o, j) => (
              <Td key={j} $kind="odds">
                <OddsButton
                  aria-label={o || "赔率"}
                  $state={m.id === "004" && j === 0 ? "on" : m.id === "007" && j === 2 ? "hover" : undefined}
                >
                  {o}
                </OddsButton>
              </Td>
            ))}
            <Td $kind="data">
              <DataLinks $end={i > 4}>
                {(i > 4 ? ["欧"] : ["析", "亚", "欧"]).map((t) => (
                  <Link key={t} href="#">{t}</Link>
                ))}
              </DataLinks>
            </Td>
            <Td>
              <Averages>
                {m.avg.map((a, j) => (
                  <Average key={j} $mark={m.id === "004" && j === 0}>{a}</Average>
                ))}
              </Averages>
            </Td>
          </Tr>
        ))}
      </tbody>
    </Matches>
    <LeagueFilter />
  </TableArea>
);

const PassFilter = () => (
  <PassPopup>
    <PassHead>
      请选择过关方式
      <Link href="#" $color="#0a70cc">隐藏</Link>
    </PassHead>
    <PassTop>
      <Grid $cols="repeat(5, 64px)" $line={22}>
        <Check on>5串1</Check>
        <Check>6串1</Check>
      </Grid>
    </PassTop>
    <PassBody>
      <Grid $cols="repeat(5, 64px)" $line={22}>
        {passes.map((p, i) =>
          p ? <Check key={i} on={passesOn.includes(p)}>{p}</Check> : <span key={i} />
        )}
      </Grid>
    </PassBody>
    <PassTail>
      更多（<Link as="span" $color={c.orange}>1</Link>）<DoubleChevron up />
    </PassTail>
  </PassPopup>
);

const Bets = () => (
  <BetBar>
    <Picked>
      已选 <Red>4</Red> 场
      <Dan>[设胆]<DoubleChevron /></Dan>
    </Picked>
    <OnlyPicked>
      <Check gap={4}>只看已选赛事</Check>
      <Link href="#">全删</Link>
    </OnlyPicked>
    <Rule />
    <BetLines>
      <BetLine>
        过关方式
        <PassChoices>
          <Check on gap={6}>2 串 1</Check>
          <Check gap={3}>3 串 1</Check>
          <Check gap={3}>4 串 1</Check>
        </PassChoices>
      </BetLine>
      <BetLine>
        投注倍数
        <Stepper>
          <StepButton aria-label="减少">
            <svg width="12" height="11" stroke="#777"><path d="M0 5.500h12" /></svg>
          </StepButton>
          <StepInput aria-label="投注倍数" defaultValue="2" />
          <StepButton aria-label="增加">
            <svg width="12" height="11" stroke="#777"><path d="M0 5.500h12M5.500 0v11" /></svg>
          </StepButton>
        </Stepper>
        <span>金额 <Red>3</Red> 元</span>
        <Prize>
          理论最高奖金 <Red>919.78</Red> 元
          <svg width="14" height="14" viewBox="0 0 14 14">
            <circle cx="7" cy="7" r="7" fill="#9a9a9a" />
            <path d="M4.800 5.400q.1-2 2.200-2 2.200 0 2.200 1.800 0 1.200-1.200 1.800-1 .5-1 1.500M7 9.700v1.400" fill="none" stroke="#fff" strokeWidth="1.300" />
          </svg>
        </Prize>
        <Link href="#">明细</Link>
      </BetLine>
    </BetLines>
    <Push />
    <Rule />
    <Links2>
      <Link href="#">奖金优化</Link>
      <Link href="#">在线过滤</Link>
    </Links2>
    <Actions>
      <Action>确认投注</Action>
      <Action $gold>发起合买</Action>
    </Actions>
    <PassFilter />
    <ToTop href="#" aria-label="返回顶部">
      <svg width="30" height="33" viewBox="0 0 30 33">
        <path d="M0 0h30v29H0Z" fill="#ededed" />
        <path d="M15 1 30 18H20v11H10V18H0Z" fill="#c9c9c9" />
        <path d="M0 31h30v2H0Z" fill="#c9c9c9" />
      </svg>
    </ToTop>
  </BetBar>
);

const Footer = () => (
  <footer>
    <SiteLinks>
      <Divided items={["关于星网", "商务合作", "客户服务", "安全承诺", "加入星网", "法律声明", "网站地图", "联系我们", "星网特色", "友情链接", "测试网速"]} dark />
    </SiteLinks>
    <Legal>
      <LegalRow>
        <span><LatinMono>Copyright © 2002-2014 </LatinMono>澳客彩票网</span>
        <span><LatinMono>All rights reserved.</LatinMono></span>
        <Warn>
          <svg width="15" height="13" viewBox="0 0 15 13">
            <path d="M7.500.8 14.300 12.300H.7Z" fill="#f6ee3c" stroke="#a09a30" />
            <path d="M7.500 4v4.500M7.500 9.500v1.500" stroke="#333" strokeWidth="1.300" />
          </svg>
          <span>彩票有风险，购买要适度。禁止<Small>18</Small>周岁以下未成年人购买彩票。</span>
        </Warn>
      </LegalRow>
      <LegalRow>
        {["京ICP备13050419号", "京ICP 证140132号", "京公网安备110105002105号", "京海分局网备110108000760号", "增值电信业务经营许可证：京B2-20110012"].map((t) => (
          <span key={t}><Mixed text={t} /></span>
        ))}
      </LegalRow>
    </Legal>
    <Badges>
      <Badge href="#" $w={109}><IconPad><QualysMark /></IconPad><Qualys>QUALYS'<em>SECURE</em></Qualys></Badge>
      <Badge href="#" $w={82}><PoliceBox /><BadgeText>网络<br />警察</BadgeText></Badge>
      <Badge href="#" $w={111}><InfoShield /><BadgeText $pad={4}>公共信息网<br />络安全监察</BadgeText></Badge>
      <Badge href="#" $w={84}>
        <PoliceBox small />
        <Award>举报有奖</Award>
        <BadgeText>网络<br />警察</BadgeText>
      </Badge>
      <Badge href="#" $w={90}><TrustSeal /><BadgeText>中国信<br />用企业</BadgeText></Badge>
      <Badge href="#" $w={99}>
        <BadgeSweep width="60" height="38"><path d="M0 0h60v38H0q14-19 0-38Z" fill="#12a512" /></BadgeSweep>
        <Laurel />
        <BadgeText $light>安全联盟<br />可信认证</BadgeText>
      </Badge>
      <Badge href="#" $w={99}><Scales /><BadgeText $pad={2}>网上交易<br />保障中心</BadgeText></Badge>
      <Badge href="#" $w={109}><Crest /><BadgeText $pad={9}>工商网监<br />电子标识</BadgeText></Badge>
      <Badge href="#" $w={111}>
        <BadgeSweep width="70" height="38">
          <path d="M3 0h10v38H0q18-19 3-38Z" fill="#f6b800" />
          <path d="M8 0h62v38H6q14-19 2-38Z" fill="#d4101e" />
        </BadgeSweep>
        <Knot />
        <BadgeText $light>可信网站<br />身份验证</BadgeText>
      </Badge>
    </Badges>
    <Hot>
      <HotRow>
        <b>热门彩种投注：</b>
        {hot1.map(([t, wide]) => <HotLink key={t} href="#" $wide={wide}><Mixed text={t} /></HotLink>)}
      </HotRow>
      <HotRow>
        <b>热门资讯导航：</b>
        {hot2.map((t) => <HotLink key={t} href="#"><Mixed text={t} /></HotLink>)}
      </HotRow>
    </Hot>
  </footer>
);

export default function App() {
  return (
    <>
      <GlobalStyle />
      <Header />
      <main>
        <FilterArea />
        <MatchTable />
        <Bets />
        <Tips>
          <b>星网提示您：</b>本站销售的竞彩足球让球胜平负、半全场、总进球投注时间为官方截止前 2 分钟，全国最晚。您可直接购买竞彩足球或参与竞彩足球合买，也可以在竞彩足球选单提交后保存方案进行竞彩足球模拟投注，还可以将竞彩足球选单在线过滤。为您提供竞彩足球过关赔率、竞彩足球开奖公告、竞彩足球奖金计算器、竞彩足球预测推荐等内容，方便您全面分析竞彩足球，储值提款即时到账奖金实时派发让您足不出户购买竞彩足球。
        </Tips>
      </main>
      <Footer />
    </>
  );
}
